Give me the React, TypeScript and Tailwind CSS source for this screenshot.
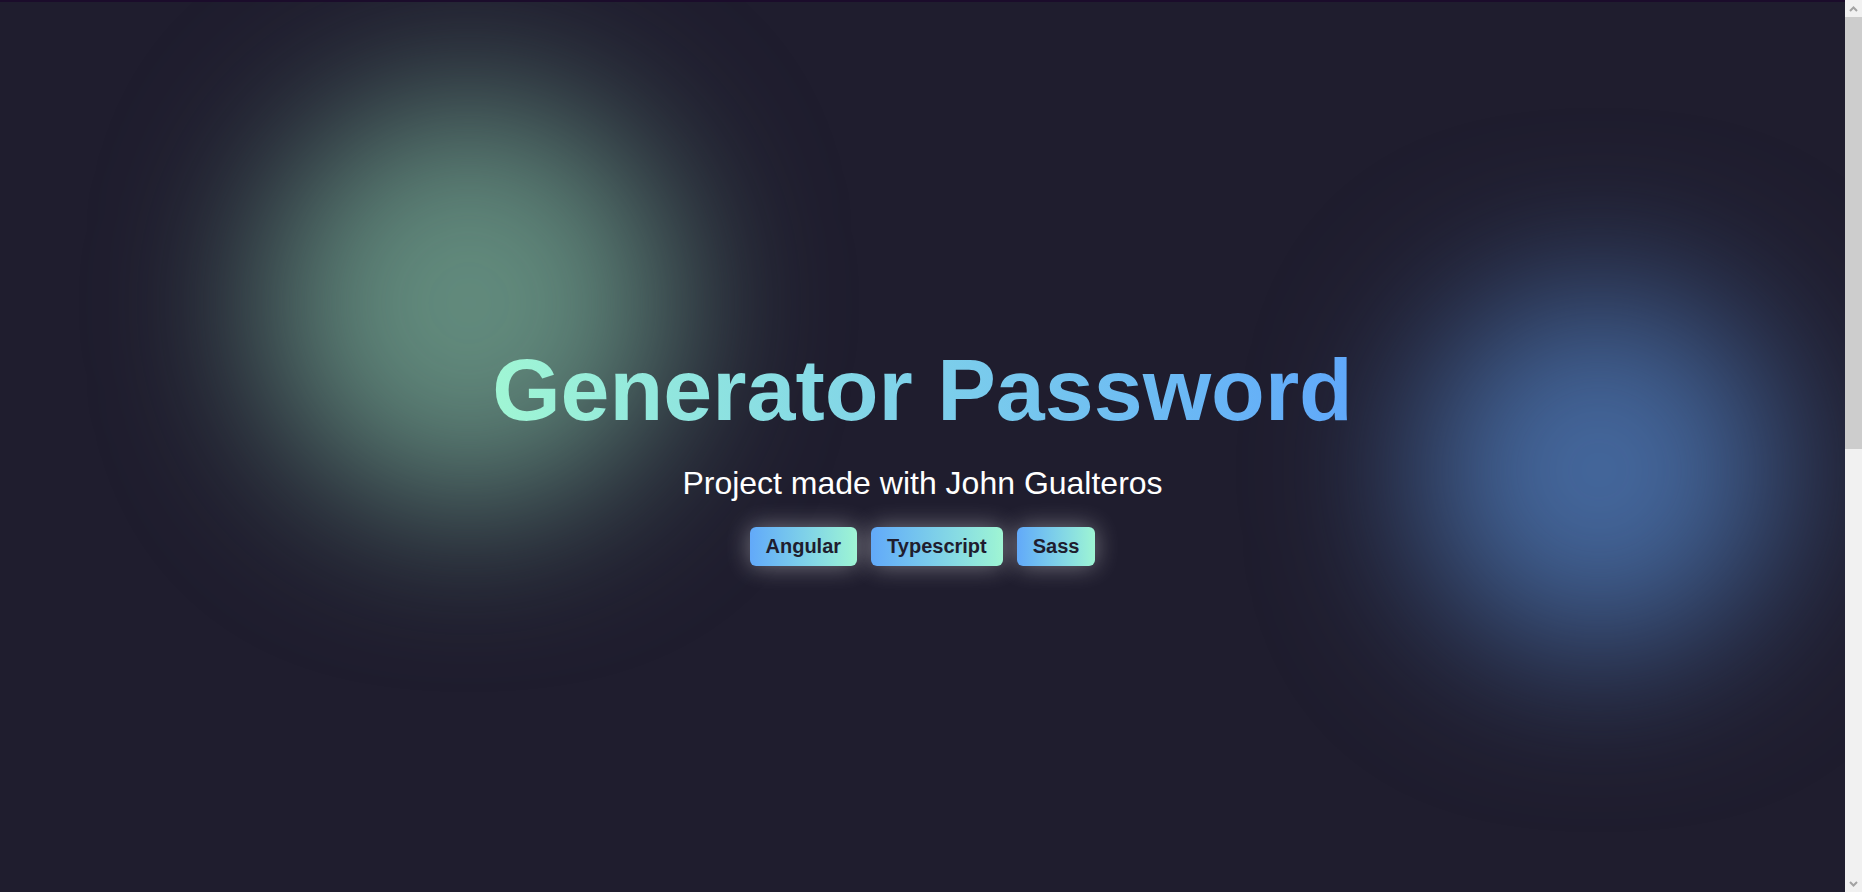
import React from 'react';

const stack = ['Angular', 'Typescript', 'Sass'];

function ScrollArrow({ up }: { up?: boolean }) {
  return (
    <div className="h-[17px] flex items-center justify-center">
      <svg width="9" height="6" viewBox="0 0 9 6" fill="none">
        <polyline
          points={up ? '1,5 4.5,1.5 8,5' : '1,1 4.5,4.5 8,1'}
          stroke="#a3a3a3"
          strokeWidth="2"
        />
      </svg>
    </div>
  );
}

function App() {
  return (
    <div className="h-screen flex overflow-hidden bg-[#1f1d2e] font-['Liberation_Sans',Arial,sans-serif]">
      <div className="relative flex-1 overflow-hidden border-t-2 border-[#1b0c2b]">
        {/* Glow blobs */}
        <div className="pointer-events-none absolute left-[263px] top-[95px] w-[412px] h-[412px] rounded-full bg-[#628b7d] blur-[80px]"></div>
        <div className="pointer-events-none absolute left-[1419px] top-[288px] w-[360px] h-[360px] rounded-full bg-[#45699f] blur-[80px]"></div>

        {/* Hero */}
        <section className="relative z-10 h-[890px] flex flex-col items-center pt-[344px]">
          <h1 className="w-fit text-[88px] font-bold leading-none bg-gradient-to-r from-[#a0f6d4] to-[#60a8fa] bg-clip-text text-transparent">
            Generator Password
          </h1>
          <p className="mt-[33px] text-[32px] leading-none text-white">Project made with John Gualteros</p>
          <div className="mt-[28px] flex gap-[14px]">
            {stack.map((item) => (
              <span
                key={item}
                className="px-4 py-[5px] rounded-md bg-gradient-to-r from-[#62a9f9] to-[#9ef5d3] text-[20px] leading-[29px] font-bold text-[#1f1d2e] shadow-[0_0_24px_rgba(255,255,255,0.4)]"
              >
                {item}
              </span>
            ))}
          </div>
        </section>
      </div>

      {/* Page scrollbar */}
      <div className="w-[17px] flex flex-col bg-[#f1f1f1]">
        <ScrollArrow up />
        <div className="h-[432px] bg-[#cdcdcd]"></div>
        <div className="flex-1"></div>
        <ScrollArrow />
      </div>
    </div>
  );
}

export default App;
